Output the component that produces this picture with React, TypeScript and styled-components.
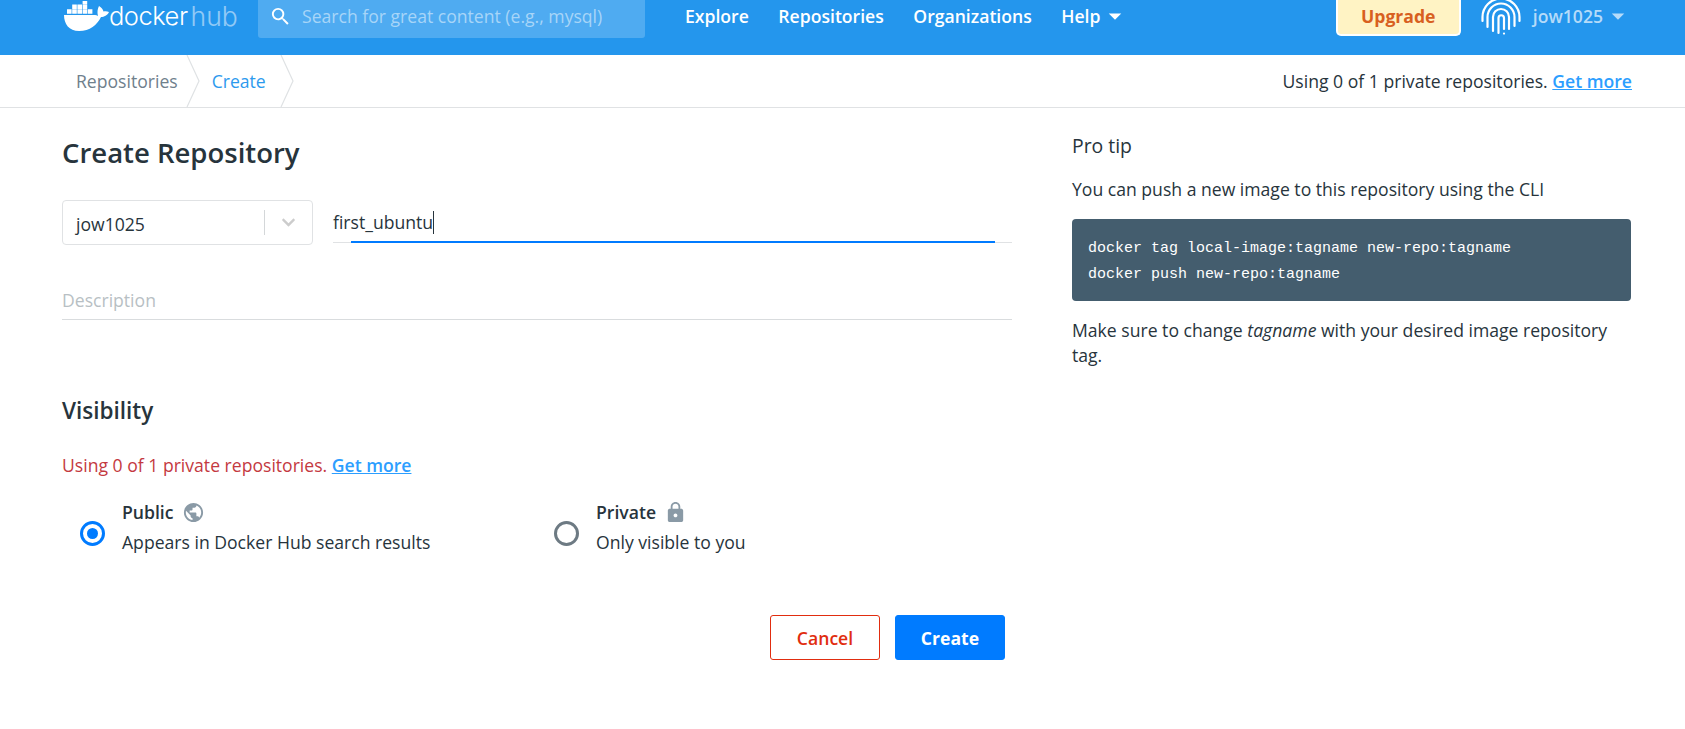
import React from "react";
import styled, { createGlobalStyle } from "styled-components";
import { MdSearch, MdArrowDropDown, MdPublic, MdLock } from "react-icons/md";
import { FaChevronDown } from "react-icons/fa";

const Global = createGlobalStyle`
  html, body { margin: 0; padding: 0; background: #fff; }
  body { font-family: "Open Sans", "Liberation Sans", sans-serif; color: #27343c; font-size: 17.6px; overflow: hidden; }
  * { box-sizing: border-box; }
`;

const Page = styled.div`
  width: 1685px;
  height: 729px;
  overflow: hidden;
`;

const Header = styled.header`
  height: 55px;
  background: #2496ed;
  display: flex;
  align-items: flex-start;
  padding-left: 64px;
  overflow: hidden;
`;

const Logo = styled.div`
  width: 194px;
  height: 32px;
  display: flex;
  align-items: center;
  flex-shrink: 0;
`;

const LogoWord = styled.span<{ $dim?: boolean }>`
  font-family: Inter, "Open Sans", sans-serif;
  font-weight: 300;
  font-size: ${(p) => (p.$dim ? "26.5px" : "25.5px")};
  letter-spacing: ${(p) => (p.$dim ? "0" : "-0.5px")};
  line-height: 32px;
  color: #fff;
  opacity: ${(p) => (p.$dim ? 0.5 : 1)};
  margin-left: ${(p) => (p.$dim ? "3px" : "-1px")};
`;

const Search = styled.div`
  width: 387px;
  height: 38px;
  background: #4fabf1;
  border-radius: 0 0 3px 3px;
  display: flex;
  align-items: center;
  padding-left: 11px;
  padding-bottom: 6px;
  color: #fff;
  flex-shrink: 0;
`;

const SearchText = styled.span`
  margin-left: 10px;
  color: #a7d5f8;
  font-size: 17.6px;
`;

const Nav = styled.nav`
  display: flex;
  margin-left: 40px;
  gap: 29.5px;
  height: 32px;
  align-items: center;
`;

const NavItem = styled.span`
  display: inline-flex;
  align-items: center;
  color: #fff;
  font-weight: 600;
  font-size: 17.6px;
`;

const Right = styled.div`
  margin-left: auto;
  display: flex;
  align-items: flex-start;
  padding-right: 52px;
`;

const Upgrade = styled.div`
  width: 125px;
  height: 36px;
  background: #fff3c4;
  border: 2px solid #fff;
  border-top: none;
  border-radius: 0 0 5px 5px;
  color: #d8601f;
  font-weight: 700;
  font-size: 17.6px;
  display: flex;
  align-items: center;
  justify-content: center;
  padding-bottom: 2px;
`;

const User = styled.div`
  display: flex;
  align-items: center;
  margin-left: 20px;
  height: 32px;
  color: #b5dbf9;
  font-weight: 600;
  font-size: 17.6px;
`;

const Finger = styled.svg`
  width: 40px;
  height: 36px;
  margin-right: 12px;
  align-self: flex-start;
  flex-shrink: 0;
`;

const Crumbs = styled.div`
  height: 53px;
  border-bottom: 1px solid #e0e2e4;
  display: flex;
  align-items: stretch;
  padding: 0 53px 0 76px;
  font-size: 17.6px;
`;

const Crumb = styled.div<{ $active?: boolean }>`
  display: flex;
  align-items: center;
  color: ${(p) => (p.$active ? "#2c9aee" : "#6f808c")};
  padding-right: ${(p) => (p.$active ? "14px" : "8px")};
`;

const CrumbArrow = styled.svg<{ $first?: boolean }>`
  width: 14px;
  height: 52px;
  margin-right: ${(p) => (p.$first ? "12px" : "13px")};
  flex-shrink: 0;
`;

const Usage = styled.div`
  margin-left: auto;
  align-self: center;
  color: #27343c;
`;

const Link = styled.a`
  color: #2c9eff;
  text-decoration: underline;
  font-weight: 600;
`;

const Main = styled.main`
  display: flex;
  padding: 0 53px 0 62px;
`;

const FormCol = styled.section`
  width: 950px;
  flex-shrink: 0;
`;

const Title = styled.h1`
  margin: 25px 0 0;
  font-size: 27.5px;
  line-height: 40px;
  font-weight: 600;
  color: #27343c;
`;

const NameRow = styled.div`
  display: flex;
  margin-top: 27px;
`;

const Select = styled.div`
  width: 251px;
  height: 45px;
  border: 1px solid #e0e2e4;
  border-radius: 4px;
  display: flex;
  align-items: center;
  padding: 2px 0 0 13px;
  flex-shrink: 0;
`;

const SelectValue = styled.span`
  flex: 1;
`;

const SelectDivider = styled.span`
  width: 1px;
  height: 25px;
  margin-top: -2px;
  background: #d4d7d9;
`;

const SelectChevron = styled.span`
  width: 47px;
  display: flex;
  justify-content: center;
  color: #ccc;
  font-size: 15px;
  margin-top: -2px;
`;

const NameField = styled.div`
  position: relative;
  margin-left: 20px;
  width: 679px;
  height: 43px;
  border-bottom: 1px solid #e0e2e4;
  display: flex;
  align-items: center;
  padding-top: 2px;
`;

const Caret = styled.span`
  display: inline-block;
  width: 1px;
  height: 23px;
  background: #27343c;
`;

const FocusLine = styled.span`
  position: absolute;
  left: 18px;
  right: 17px;
  bottom: -1px;
  height: 2px;
  background: #007bff;
`;

const Description = styled.div`
  margin-top: 29px;
  height: 46px;
  border-bottom: 1px solid #d9dcde;
  color: #b8bfc4;
  line-height: 52px;
`;

const SubTitle = styled.h2`
  margin: 75px 0 0;
  font-size: 22.5px;
  line-height: 32px;
  font-weight: 600;
`;

const Warning = styled.p`
  margin: 26px 0 0;
  line-height: 24px;
  color: #c4393f;
`;

const Options = styled.div`
  display: flex;
  margin-top: 20px;
  padding-left: 18px;
`;

const Option = styled.div`
  display: flex;
  align-items: center;
  width: 474px;
  flex-shrink: 0;
`;

const Radio = styled.span<{ $on?: boolean }>`
  width: 25px;
  height: 25px;
  margin: 12px 17px 0 0;
  border-radius: 50%;
  border: 3px solid ${(p) => (p.$on ? "#007bff" : "#6d7a83")};
  display: flex;
  align-items: center;
  justify-content: center;
  flex-shrink: 0;
  &::after {
    content: "";
    display: ${(p) => (p.$on ? "block" : "none")};
    width: 11px;
    height: 11px;
    border-radius: 50%;
    background: #007bff;
  }
`;

const OptionText = styled.div`
  display: flex;
  flex-direction: column;
  line-height: 30px;
`;

const OptionLabel = styled.span`
  display: flex;
  align-items: center;
  gap: 8px;
  font-weight: 600;
  color: #27343c;
`;

const OptionIcon = styled.span`
  display: flex;
  color: #8a9aa6;
  font-size: 23px;
`;

const Actions = styled.div`
  display: flex;
  justify-content: flex-end;
  gap: 15px;
  margin-top: 58px;
  padding-right: 7px;
`;

const Button = styled.button<{ $primary?: boolean }>`
  width: 110px;
  height: 45px;
  border-radius: 3px;
  font-family: inherit;
  font-size: 17.6px;
  font-weight: ${(p) => (p.$primary ? 700 : 600)};
  border: 1px solid ${(p) => (p.$primary ? "#007bff" : "#e12d0f")};
  background: ${(p) => (p.$primary ? "#007bff" : "#fff")};
  color: ${(p) => (p.$primary ? "#fff" : "#e12d0f")};
`;

const TipCol = styled.aside`
  margin-left: 60px;
  width: 559px;
  line-height: 25px;
`;

const TipTitle = styled.h3`
  margin: 24px 0 0;
  font-size: 19.4px;
  font-weight: 400;
  line-height: 28px;
`;

const TipText = styled.p`
  margin: 17px 0 0;
`;

const Code = styled.pre`
  margin: 17px 0 1px;
  height: 82px;
  border-radius: 4px;
  background: #445d6e;
  color: #fff;
  padding: 17px 16px;
  font-family: "Liberation Mono", "DejaVu Sans Mono", monospace;
  font-size: 15px;
  line-height: 26px;
`;

const Whale = () => (
  <svg width="46" height="31" viewBox="0 0 46 31" fill="#fff">
    <path d="M0 14H31C32 14 33 14.500 34 15C33 11 33.500 8 35 5C37.500 6.500 39 8.500 39.500 10.500C41 10 43 10 45 11C43.500 14.500 40 16 37 16C33 24 26 30 15 30C5 30 0 23 0 14Z" />
    <path d="M3 8.200h4.600v4.600H3zM8.200 8.200h4.600v4.600H8.200zM13.400 8.200h4.600v4.600h-4.600zM18.600 8.200h4.600v4.600h-4.600zM23.800 8.200h4.600v4.600h-4.600zM8.200 3.400h4.600V8H8.200zM13.400 3.400h4.600V8h-4.600zM18.600 3.400h4.600V8h-4.600zM18.600 -1.400h4.600v4.600h-4.600z" />
  </svg>
);

const Fingerprint = () => (
  <Finger viewBox="0 0 40 36" fill="none" stroke="#fff" strokeWidth="2.200" strokeLinecap="round">
    <path d="M1.500 21V17A18.500 18.500 0 0 1 38.500 17V21" />
    <path d="M6.500 27V17A13.500 13.500 0 0 1 33.500 17V26" />
    <path d="M12 31V17A8 8 0 0 1 28 17V29" />
    <path d="M17.500 33V18A2.700 2.700 0 0 1 23 18V29" />
    <path d="M23 33.500V33.600" />
  </Finger>
);

const Arrow = ({ first }: { first?: boolean }) => (
  <CrumbArrow $first={first} viewBox="0 0 14 52" fill="none" stroke="#dfe2e4" strokeWidth="1.200">
    <path d="M1 0l12 26L1 52" />
  </CrumbArrow>
);

export default function App() {
  return (
    <Page>
      <Global />
      <Header>
        <Logo>
          <Whale />
          <LogoWord>docker</LogoWord>
          <LogoWord $dim>hub</LogoWord>
        </Logo>
        <Search>
          <MdSearch size={23} />
          <SearchText>Search for great content (e.g., mysql)</SearchText>
        </Search>
        <Nav>
          <NavItem>Explore</NavItem>
          <NavItem>Repositories</NavItem>
          <NavItem>Organizations</NavItem>
          <NavItem>
            Help
            <MdArrowDropDown size={30} />
          </NavItem>
        </Nav>
        <Right>
          <Upgrade>Upgrade</Upgrade>
          <User>
            <Fingerprint />
            jow1025
            <MdArrowDropDown size={30} />
          </User>
        </Right>
      </Header>
      <Crumbs>
        <Crumb>Repositories</Crumb>
        <Arrow first />
        <Crumb $active>Create</Crumb>
        <Arrow />
        <Usage>
          Using 0 of 1 private repositories. <Link>Get more</Link>
        </Usage>
      </Crumbs>
      <Main>
        <FormCol>
          <Title>Create Repository</Title>
          <NameRow>
            <Select>
              <SelectValue>jow1025</SelectValue>
              <SelectDivider />
              <SelectChevron>
                <FaChevronDown />
              </SelectChevron>
            </Select>
            <NameField>
              first_ubuntu
              <Caret />
              <FocusLine />
            </NameField>
          </NameRow>
          <Description>Description</Description>
          <SubTitle>Visibility</SubTitle>
          <Warning>
            Using 0 of 1 private repositories. <Link>Get more</Link>
          </Warning>
          <Options>
            <Option>
              <Radio $on />
              <OptionText>
                <OptionLabel>
                  Public
                  <OptionIcon>
                    <MdPublic />
                  </OptionIcon>
                </OptionLabel>
                <span>Appears in Docker Hub search results</span>
              </OptionText>
            </Option>
            <Option>
              <Radio />
              <OptionText>
                <OptionLabel>
                  Private
                  <OptionIcon>
                    <MdLock />
                  </OptionIcon>
                </OptionLabel>
                <span>Only visible to you</span>
              </OptionText>
            </Option>
          </Options>
          <Actions>
            <Button>Cancel</Button>
            <Button $primary>Create</Button>
          </Actions>
        </FormCol>
        <TipCol>
          <TipTitle>Pro tip</TipTitle>
          <TipText>You can push a new image to this repository using the CLI</TipText>
          <Code>
            {"docker tag local-image:tagname new-repo:tagname\ndocker push new-repo:tagname"}
          </Code>
          <TipText>
            Make sure to change <em>tagname</em> with your desired image repository tag.
          </TipText>
        </TipCol>
      </Main>
    </Page>
  );
}
